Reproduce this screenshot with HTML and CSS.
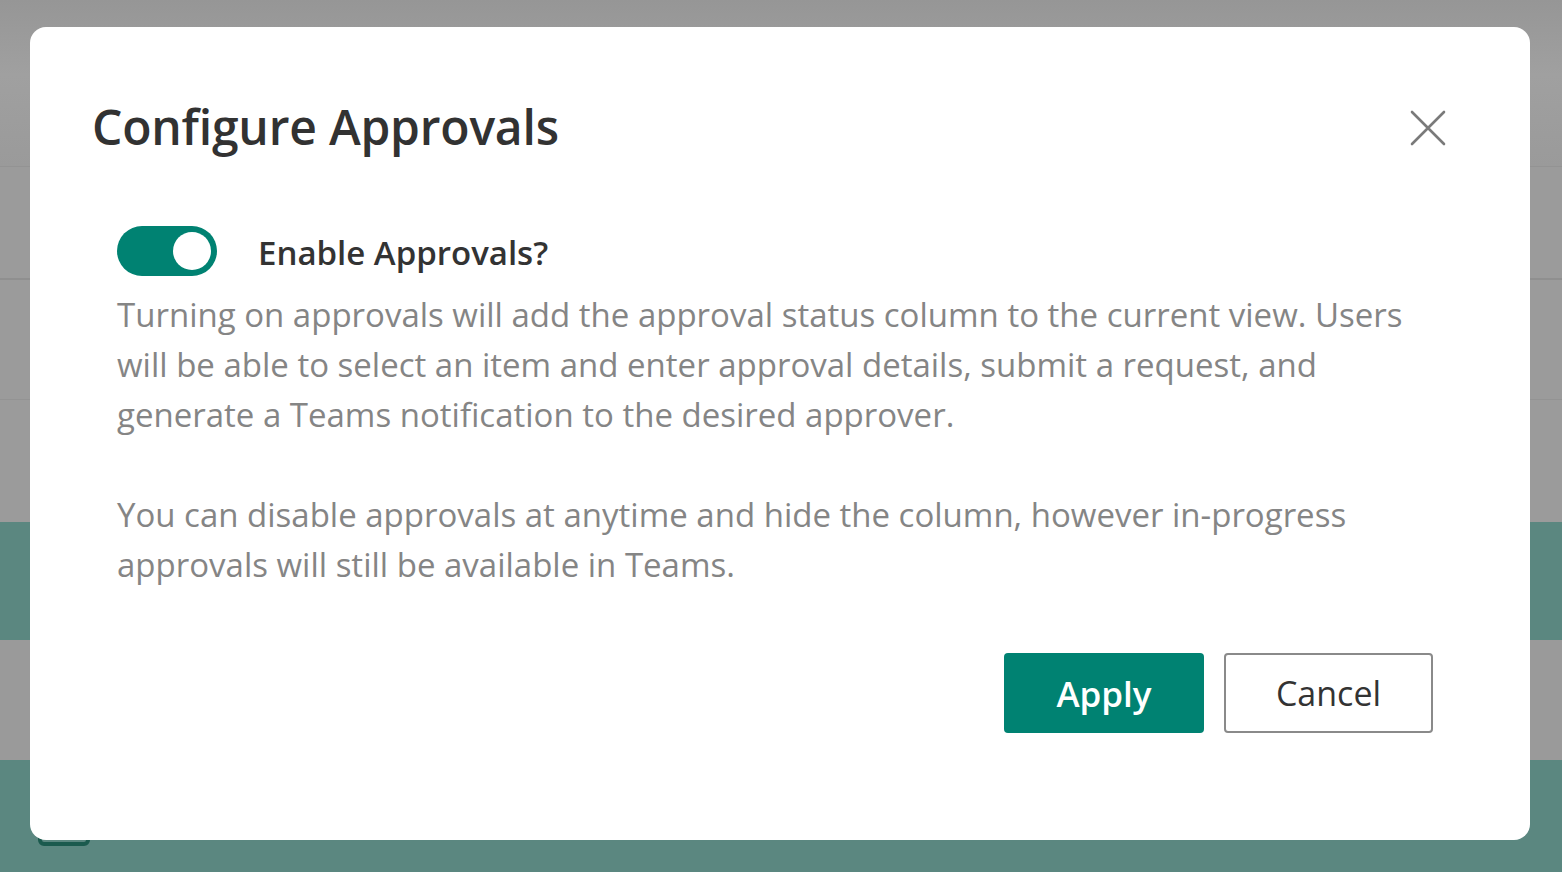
FILE: index.html
```html
<!DOCTYPE html>
<html lang="en">
<head>
<meta charset="utf-8">
<title>Configure Approvals</title>
<link rel="stylesheet" href="styles.css">
</head>
<body>
<div class="page">
  <div class="band band-head"></div>
  <div class="band band-g1"></div>
  <div class="band band-g2"></div>
  <div class="band band-g3"></div>
  <div class="band band-teal"></div>
  <div class="band band-g4"></div>
  <div class="band band-teal band-last"><span class="ghost-btn"></span></div>
</div>

<div class="dialog" role="dialog" aria-labelledby="dlg-title">
  <header class="dialog-header">
    <h1 id="dlg-title" class="dialog-title">Configure Approvals</h1>
    <button class="close-btn" aria-label="Close">
      <svg width="36" height="36" viewBox="0 0 36 36"><path d="M2 2 L34 34 M34 2 L2 34" stroke="#7a7a7a" stroke-width="2.6" fill="none" stroke-linecap="round"/></svg>
    </button>
  </header>
  <div class="dialog-body">
    <div class="toggle-row">
      <span class="toggle"><span class="knob"></span></span>
      <span class="toggle-label">Enable Approvals?</span>
    </div>
    <p class="desc">Turning on approvals will add the approval status column to the current view. Users will be able to select an item and enter approval details, submit a request, and generate a Teams notification to the desired approver.</p>
    <p class="desc">You can disable approvals at anytime and hide the column, however in-progress approvals will still be available in Teams.</p>
  </div>
  <footer class="dialog-footer">
    <button class="btn btn-primary">Apply</button>
    <button class="btn btn-default">Cancel</button>
  </footer>
</div>
</body>
</html>
```

FILE: styles.css
```css
* { box-sizing: border-box; }
html, body { margin: 0; padding: 0; }
body {
  width: 1562px;
  height: 872px;
  overflow: hidden;
  font-family: "Open Sans", "Noto Sans", "Liberation Sans", sans-serif;
  position: relative;
  background: #9a9a9a;
}
.page {
  display: flex;
  flex-direction: column;
  height: 872px;
}
.band {
  flex: none;
  background: #9b9b9b;
}
.band-head {
  height: 167px;
  background: linear-gradient(#969696, #a0a0a0 45%, #9a9a9a);
  border-bottom: 1px solid #939393;
}
.band-g1 { height: 113px; border-bottom: 2px solid #8f8f8f; }
.band-g2 { height: 120px; border-bottom: 1px solid #939393; }
.band-g3 { height: 122px; }
.band-teal {
  height: 118px;
  background: #5b8780;
}
.band-g4 { height: 120px; background: #9a9a9a; }
.band-last {
  flex: 1;
  padding: 0 0 0 38px;
  display: flex;
  align-items: flex-end;
}
.ghost-btn {
  display: block;
  width: 52px;
  height: 40px;
  margin-bottom: 26px;
  border: 4px solid #1b5a4e;
  border-radius: 6px;
}

.dialog {
  position: absolute;
  left: 30px;
  top: 27px;
  width: 1500px;
  height: 813px;
  background: #fff;
  border-radius: 16px;
  padding: 0 0 0 62px;
  display: flex;
  flex-direction: column;
  color: #333;
}
.dialog-header {
  display: flex;
  align-items: center;
  justify-content: space-between;
  height: 200px;
  padding: 0 84px 0 0;
}
.dialog-title {
  margin: 0;
  font-size: 48px;
  font-weight: 600;
  color: #323232;
  letter-spacing: -0.2px;
  padding-bottom: 2px;
}
.close-btn {
  border: 0;
  background: none;
  padding: 0;
  width: 36px;
  height: 36px;
  display: block;
  margin-top: 2px;
}
.close-btn svg { display: block; }
.dialog-body {
  padding: 0 105px 0 25px;
  margin-top: -1px;
}
.toggle-row {
  display: flex;
  align-items: center;
  gap: 41px;
  height: 50px;
}
.toggle {
  width: 100px;
  height: 50px;
  border-radius: 25px;
  background: #008272;
  display: flex;
  align-items: center;
  justify-content: flex-end;
  padding-right: 6px;
  flex: none;
}
.knob {
  width: 38px;
  height: 38px;
  border-radius: 50%;
  background: #fff;
}
.toggle-label {
  font-size: 33px;
  font-weight: 600;
  color: #333;
  padding-top: 2px;
}
.desc {
  margin: 0 0 50px;
  font-size: 33px;
  line-height: 50px;
  color: #858585;
}
.desc:first-of-type { margin-top: 14px; }
.desc:last-child { margin-bottom: 0; }
.dialog-footer {
  margin-top: auto;
  display: flex;
  justify-content: flex-end;
  gap: 20px;
  padding: 0 97px 107px 0;
}
.btn {
  height: 80px;
  font-family: inherit;
  border-radius: 4px;
  padding: 0;
  cursor: pointer;
}
.btn-primary {
  width: 200px;
  background: #008272;
  color: #fff;
  border: none;
  font-size: 35px;
  font-weight: 600;
}
.btn-default {
  width: 209px;
  background: #fff;
  color: #333;
  border: 2px solid #8a8a8a;
  font-size: 34px;
  font-weight: 500;
}
```
